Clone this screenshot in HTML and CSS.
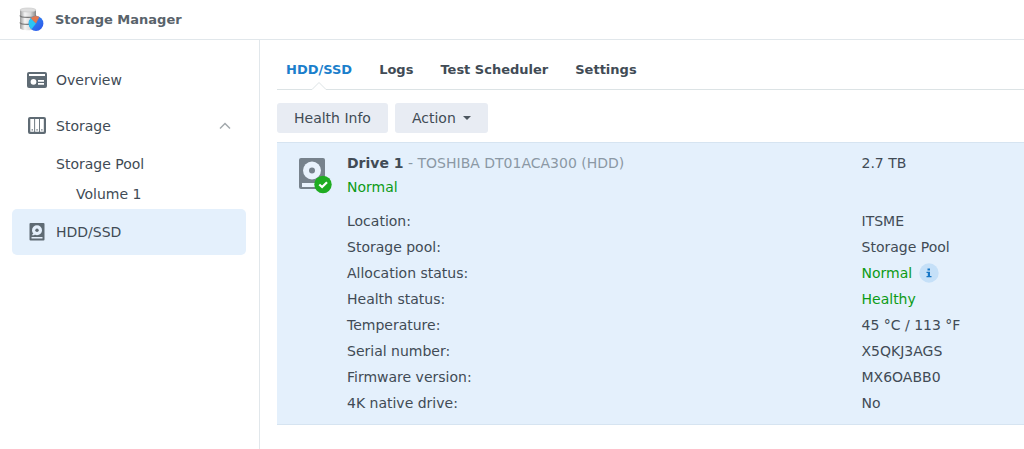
FILE: index.html
```html
<!DOCTYPE html>
<html lang="en">
<head>
<meta charset="utf-8">
<meta name="viewport" content="width=device-width, initial-scale=1">
<title>Storage Manager</title>
<link rel="stylesheet" href="styles.css">
</head>
<body>
<header class="titlebar">
  <svg class="app-icon" viewBox="0 0 26 26" aria-hidden="true">
    <defs>
      <linearGradient id="metal" x1="0" x2="1">
        <stop offset="0" stop-color="#999"/>
        <stop offset=".3" stop-color="#f4f4f4"/>
        <stop offset=".65" stop-color="#d9d9d9"/>
        <stop offset="1" stop-color="#858585"/>
      </linearGradient>
      <linearGradient id="pie" x1="0" y1="0" x2="1" y2="1">
        <stop offset="0" stop-color="#2d9bf5"/>
        <stop offset="1" stop-color="#2f50e8"/>
      </linearGradient>
    </defs>
    <path d="M2 3v18c0 3 16 3 16 0V3z" fill="url(#metal)"/>
    <ellipse cx="10" cy="3" rx="8" ry="2" fill="#dedede" stroke="#c4c4c4" stroke-width=".6"/>
    <path d="M2 8.500c0 2.500 16 2.500 16 0M2 15.500c0 2.500 16 2.500 16 0" fill="none" stroke="#777" stroke-width="1.300"/>
    <circle cx="18" cy="16.500" r="7.400" fill="url(#pie)"/>
    <path d="M18 16.500 12.800 11.300A7.400 7.400 0 0 0 13.500 22.200z" fill="#2cc5f3"/>
    <path d="M18 16.500 12.800 11.300A7.400 7.400 0 0 1 21.300 10z" fill="#e2794f"/>
  </svg>
  <h1 class="app-title">Storage Manager</h1>
</header>
<div class="layout">
  <nav class="sidebar" aria-label="Sections">
    <a class="nav-item" href="#overview">
      <svg class="nav-icon" viewBox="0 0 20 20" aria-hidden="true">
        <rect x="0" y="2" width="20" height="16" rx="2" fill="#5f6b74"/>
        <path d="M2 4h16v2H2zM11 10h6v1.800h-6zM11 13h6v1.800h-6z" fill="#fff"/>
        <circle cx="6.500" cy="11.800" r="2.900" fill="#fff"/>
      </svg>
      <span>Overview</span>
    </a>
    <a class="nav-item" href="#storage" aria-expanded="true">
      <svg class="nav-icon" viewBox="0 0 20 20" aria-hidden="true">
        <rect x="1" y="1" width="18" height="17" rx="2" fill="#5f6b74"/>
        <path d="M3.300 3h3.900v12.800H3.300zM8.100 3h3.900v12.800H8.100zM12.900 3h3.900v12.800h-3.900z" fill="#fff"/>
        <path d="M4.600 13.200h1.300v1.300H4.600zM9.400 13.200h1.300v1.300H9.400zM14.200 13.200h1.300v1.300h-1.300z" fill="#5f6b74"/>
      </svg>
      <span>Storage</span>
      <svg class="chevron" viewBox="0 0 12 8" aria-hidden="true"><path d="M1 6.500l5-5 5 5" fill="none" stroke="#a3a9ad" stroke-width="1.500"/></svg>
    </a>
    <a class="nav-sub" href="#pool">Storage Pool</a>
    <a class="nav-sub nav-leaf" href="#volume">Volume 1</a>
    <a class="nav-item nav-current" href="#hdd" aria-current="page">
      <svg class="nav-icon" viewBox="0 0 20 20" aria-hidden="true">
        <rect x="2.500" y="1" width="15" height="17.500" rx="1" fill="#5f6b74"/>
        <circle cx="10" cy="8.300" r="5" fill="#e5f0fc"/>
        <circle cx="10" cy="8.300" r="1.700" fill="#5f6b74"/>
        <path d="M4.500 15h11v1.600h-11zM4.800 13.300l1.500-2 2 1.500-1.500.500z" fill="#e5f0fc"/>
      </svg>
      <span>HDD/SSD</span>
    </a>
  </nav>
  <main class="content">
    <nav class="tabs" aria-label="Views">
      <a class="tab tab-active" href="#hdd" aria-current="page">HDD/SSD
        <svg class="tab-notch" viewBox="0 0 16 9" aria-hidden="true"><path d="M0 9 1 8.500 8 1.500 15 8.500 16 9z" fill="#fff"/><path d="M0 8.500h1l7-7 7 7h1" fill="none" stroke="#dce3e5"/></svg>
      </a>
      <a class="tab" href="#logs">Logs</a>
      <a class="tab" href="#test">Test Scheduler</a>
      <a class="tab" href="#settings">Settings</a>
    </nav>
    <div class="toolbar">
      <button class="button" type="button">Health Info</button>
      <button class="button" type="button">Action
        <svg class="caret" viewBox="0 0 8 4" aria-hidden="true"><path d="M0 0h8L4 4z" fill="#4c565f"/></svg>
      </button>
    </div>
    <section class="drive">
      <svg class="drive-icon" viewBox="0 0 34 36" aria-hidden="true">
        <rect x="0" y="0" width="26" height="31" rx="2" fill="#77828c"/>
        <circle cx="13" cy="12.500" r="9" fill="#e9f2fc"/>
        <circle cx="13" cy="12.500" r="3" fill="#77828c"/>
        <path d="M3 25h14v4H3z" fill="#e9f2fc"/>
        <circle cx="24" cy="26.500" r="8.700" fill="#1fac22"/>
        <path d="M20.300 26.500l2.800 2.600 4.900-4.800" fill="none" stroke="#fff" stroke-width="2.200"/>
      </svg>
      <div class="drive-body">
        <div class="drive-head">
          <h2 class="drive-title"><strong>Drive 1</strong> <span class="model">- TOSHIBA DT01ACA300 (HDD)</span></h2>
          <span>2.7 TB</span>
        </div>
        <p class="drive-status ok">Normal</p>
        <table class="details">
          <tbody>
            <tr><th scope="row">Location:</th><td>ITSME</td></tr>
            <tr><th scope="row">Storage pool:</th><td>Storage Pool</td></tr>
            <tr><th scope="row">Allocation status:</th><td class="ok"><div class="with-info">Normal
              <button class="info" type="button" aria-label="Information"><svg viewBox="0 0 20 20" aria-hidden="true"><circle cx="10" cy="10" r="9.700" fill="#c5e0f8"/><path d="M8.500 5.500h2.500v2H8.500zM7.500 8.800H11V13h1.500v1.300h-5V13h1.300v-2.900H7.500z" fill="#1676c6"/></svg></button></div></td></tr>
            <tr><th scope="row">Health status:</th><td class="ok">Healthy</td></tr>
            <tr><th scope="row">Temperature:</th><td>45 °C / 113 °F</td></tr>
            <tr><th scope="row">Serial number:</th><td>X5QKJ3AGS</td></tr>
            <tr><th scope="row">Firmware version:</th><td>MX6OABB0</td></tr>
            <tr><th scope="row">4K native drive:</th><td>No</td></tr>
          </tbody>
        </table>
      </div>
    </section>
  </main>
</div>
</body>
</html>
```

FILE: styles.css
```css
* {
  box-sizing: border-box;
}

body {
  display: flex;
  flex-direction: column;
  min-height: 100vh;
  margin: 0;
  background: #fff;
  color: #414b55;
  font: 14px/24px Verdana, "DejaVu Sans", sans-serif;
}

a {
  color: inherit;
  text-decoration: none;
}

.titlebar {
  display: flex;
  align-items: center;
  gap: 11px;
  height: 40px;
  padding-left: 18px;
  border-bottom: 1px solid #e1e7eb;
}

.app-icon {
  width: 26px;
  height: 26px;
}

.app-title {
  margin: 0;
  color: #59636b;
  font-size: 13px;
}

.layout {
  display: flex;
  flex: 1;
}

.sidebar {
  flex: 0 0 260px;
  padding: 17px 13px 0 12px;
  border-right: 1px solid #e1e7eb;
}

.nav-item {
  display: flex;
  align-items: center;
  gap: 9px;
  height: 46px;
  padding: 0 15px;
  border-radius: 5px;
}

.nav-icon {
  width: 20px;
  height: 20px;
}

.nav-current {
  background: #e4f0fc;
}

.chevron {
  width: 12px;
  height: 8px;
  margin-left: auto;
}

.nav-sub {
  display: block;
  padding-left: 44px;
  line-height: 30px;
}

.nav-leaf {
  padding-left: 64px;
}

.content {
  flex: 1;
  min-width: 0;
  padding-left: 17px;
}

.tabs {
  display: flex;
  gap: 27px;
  height: 50px;
  padding: 18px 9px 0;
  border-bottom: 1px solid #dce3e5;
  font-size: 13px;
  font-weight: bold;
}

.tab {
  position: relative;
}

.tab-active {
  color: #1b7fcc;
}

.tab-notch {
  position: absolute;
  bottom: -1px;
  left: 50%;
  width: 16px;
  height: 9px;
  margin-left: -8px;
}

.toolbar {
  display: flex;
  gap: 7px;
  padding: 13px 0 9px;
}

.button {
  display: flex;
  align-items: center;
  gap: 7px;
  height: 30px;
  padding: 0 17px;
  border: 0;
  border-radius: 3px;
  background: #e8ecf3;
  color: inherit;
  font: inherit;
}

.caret {
  width: 8px;
  height: 4px;
}

.drive {
  display: flex;
  gap: 14px;
  padding: 8px 0 8px 22px;
  border: solid #d6e4f1;
  border-width: 1px 0;
  background: #e4f0fc;
}

.drive-icon {
  width: 34px;
  height: 36px;
  margin-top: 7px;
}

.drive-body {
  flex: 1;
}

.drive-head {
  display: grid;
  grid-template-columns: 76% 1fr;
}

.drive-title {
  margin: 0;
  font-size: 14px;
  font-weight: normal;
}

.model {
  color: #8b98a4;
}

.drive-status {
  margin: 0 0 9px;
}

.ok {
  color: #0c9b16;
}

.details {
  width: 100%;
  border-collapse: collapse;
  table-layout: fixed;
}

.details th,
.details td {
  height: 26px;
  padding: 0;
  font-weight: normal;
  text-align: left;
}

.details th {
  width: 76%;
}

.with-info {
  display: flex;
  align-items: center;
  gap: 7px;
}

.info {
  width: 20px;
  height: 20px;
  padding: 0;
  border: 0;
  background: none;
}

.info svg {
  display: block;
}
```
